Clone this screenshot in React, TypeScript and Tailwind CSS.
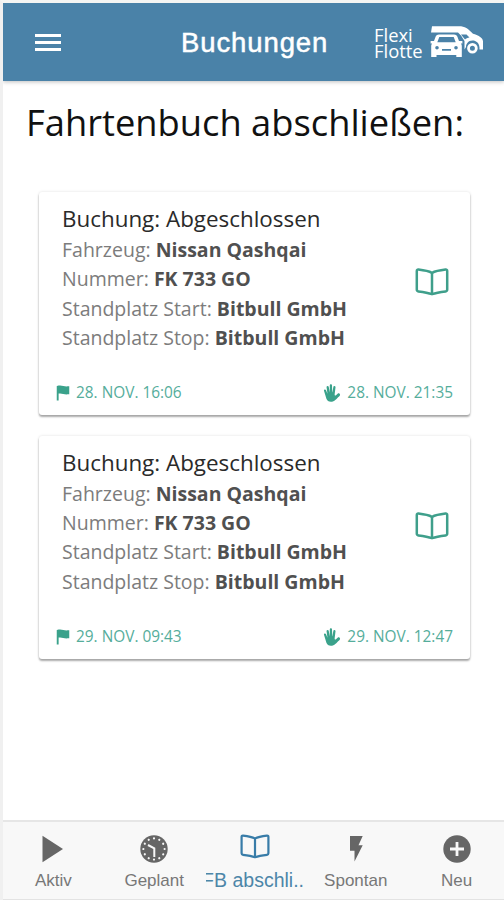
import type { ReactNode } from "react";
import { IoMdFlag, IoMdHand } from "react-icons/io";

type Booking = {
  status: string;
  vehicle: string;
  plate: string;
  from: string;
  to: string;
  start: string;
  end: string;
};

const bookings: Booking[] = [
  {
    status: "Abgeschlossen",
    vehicle: "Nissan Qashqai",
    plate: "FK 733 GO",
    from: "Bitbull GmbH",
    to: "Bitbull GmbH",
    start: "28. NOV. 16:06",
    end: "28. NOV. 21:35",
  },
  {
    status: "Abgeschlossen",
    vehicle: "Nissan Qashqai",
    plate: "FK 733 GO",
    from: "Bitbull GmbH",
    to: "Bitbull GmbH",
    start: "29. NOV. 09:43",
    end: "29. NOV. 12:47",
  },
];

const BookIcon = ({ className }: { className: string }) => (
  <svg viewBox="0 0 34 28" className={className} fill="none" stroke="currentColor" strokeWidth="2.5" strokeLinejoin="round">
    <path d="M17 4.8 C13 2.8 9 2.3 3.4 1.6 Q1.8 1.5 1.8 3 V21.6 Q1.8 23.2 3.4 23.4 C9 24 13 24.6 17 26.2 C21 24.6 25 24 30.6 23.4 Q32.2 23.2 32.2 21.6 V3 Q32.2 1.5 30.6 1.6 C25 2.3 21 2.8 17 4.8 Z" />
    <path d="M17 4.8 V26" />
  </svg>
);

const CarLogo = () => (
  <svg viewBox="0 0 54 34" className="h-[34px] w-[54px]" fill="white">
    {/* car in the back */}
    <path d="M2 1.2 H29 C35 1.2 38 3.5 43 8.8 C48 10.2 53 12.5 53 16.5 V24.5 H49.5 C50 18 46 15.5 42.5 15.5 C38 15.5 36 19 36 22 L34.5 24.5 V16 L31 10.5 L28 7.5 H1 Z" />
    <path d="M31 9.4 H36.5 L39.5 12.6 C37.5 13 36 13.6 35 14.6 Z" fill="#4a82a8" />
    <circle cx="42.4" cy="23.3" r="3.9" fill="#4a82a8" stroke="white" strokeWidth="2.8" />
    {/* car in front */}
    <path
      fillRule="evenodd"
      d="M9 9.5 H24 C26 9.5 27 10.5 27.6 12.3 L29 16 H32.4 V18.4 H30.8 C31.7 19.4 31.8 20.2 31.8 21.5 V32 H26.3 V30 H6.5 V32 H1.2 V21.5 C1.2 20.2 1.3 19.4 2.2 18.4 H.6 V16 H4 L5.4 12.3 C6 10.5 7 9.5 9 9.5 Z M9.3 12 L7.3 17.2 H25.7 L23.7 12 Z M7 21 A1.8 1.8 0 1 0 7 24.6 A1.8 1.8 0 1 0 7 21 Z M26 21 A1.8 1.8 0 1 0 26 24.6 A1.8 1.8 0 1 0 26 21 Z M12 24 V25.8 H21 V24 Z"
    />
  </svg>
);

const PlayIcon = () => (
  <svg viewBox="0 0 28 28" className="size-7" fill="currentColor">
    <path d="M3.5 .8 L24 14 L3.5 27.2 Z" />
  </svg>
);

const ClockIcon = () => (
  <svg viewBox="0 0 28 28" className="size-7">
    <circle cx="14" cy="14" r="13.7" fill="currentColor" />
    <circle
      cx="14"
      cy="14"
      r="10.6"
      fill="none"
      stroke="#f8f8f8"
      strokeWidth="2.2"
      strokeLinecap="round"
      pathLength="120"
      strokeDasharray="0.01 9.99"
    />
    <path d="M8 10 L14.3 13.4 V22" fill="none" stroke="#f8f8f8" strokeWidth="2" />
  </svg>
);

const FlashIcon = () => (
  <svg viewBox="0 0 28 28" className="size-7" fill="currentColor">
    <path d="M8 1 H20.7 L16.5 10.3 H20.7 L12.5 26.5 V15.7 H8 Z" />
  </svg>
);

const AddIcon = () => (
  <svg viewBox="0 0 28 28" className="size-7">
    <circle cx="14" cy="14" r="13.7" fill="currentColor" />
    <path d="M14 7 V21 M7 14 H21" stroke="#f8f8f8" strokeWidth="2.8" />
  </svg>
);

const Row = ({ label, value }: { label: string; value: string }) => (
  <p className="text-[19.5px] leading-[29.4px] text-[#7c7c7c]">
    {label}: <strong className="font-bold text-[#505050]">{value}</strong>
  </p>
);

const BookingCard = ({ booking }: { booking: Booking }) => (
  <div className="flex h-[223px] flex-col rounded-[3px] bg-white pt-[12px] shadow-[0_2px_2px_rgba(0,0,0,0.32),0_0_3px_rgba(0,0,0,0.13)]">
    <div className="flex items-center justify-between pr-[21px] pl-[23px]">
      <div className="whitespace-nowrap">
        <h2 className="mb-[1px] text-[22.4px] leading-[30px] text-[#2a2a2a]">Buchung: {booking.status}</h2>
        <Row label="Fahrzeug" value={booking.vehicle} />
        <Row label="Nummer" value={booking.plate} />
        <Row label="Standplatz Start" value={booking.from} />
        <Row label="Standplatz Stop" value={booking.to} />
      </div>
      <BookIcon className="mt-[8px] h-[28px] w-[34px] text-[#3f9f8b]" />
    </div>
    <div className="mt-auto mb-[11px] flex justify-between pr-[17px] pl-[14px] text-[15.4px] leading-[22px] text-[#55ad9b]">
      <div className="flex items-center gap-[3px]">
        <IoMdFlag className="size-5 text-[#3aa28b]" />
        <span>{booking.start}</span>
      </div>
      <div className="flex items-center gap-[5px]">
        <IoMdHand className="size-5 text-[#3aa28b]" />
        <span>{booking.end}</span>
      </div>
    </div>
  </div>
);

const Tab = ({ icon, label }: { icon: ReactNode; label: string }) => (
  <button className="flex min-w-0 flex-1 flex-col items-center pt-[13px] text-[#666]">
    {icon}
    <span className="mt-[7px] text-[17px] leading-[22px] text-[#777]">{label}</span>
  </button>
);

export default function App() {
  return (
    <div className="flex h-[900px] w-[504px] flex-col overflow-hidden border-t-3 border-l-3 border-t-[#f4f5f3] border-l-[#f0f0f0] bg-white font-['Open_Sans',sans-serif]">
      <header className="flex h-[78px] shrink-0 items-center bg-[#4a82a8] text-white shadow-[0_1px_4px_rgba(0,0,0,0.25)]">
        <button className="ml-8 flex w-[26px] flex-col gap-1">
          <span className="h-[3px] bg-white" />
          <span className="h-[3px] bg-white" />
          <span className="h-[3px] bg-white" />
        </button>
        <h1 className="mt-[2px] ml-[120px] w-[147px] font-['Liberation_Sans',sans-serif] text-[27.5px] leading-8 font-normal tracking-[0.9px] whitespace-nowrap [-webkit-text-stroke:0.5px_white]">
          Buchungen
        </h1>
        <div className="ml-[46px] flex items-center gap-[6px]">
          <div className="mt-[2px] flex w-[50px] flex-col text-[18.4px] leading-[16px] whitespace-nowrap">
            <span>Flexi</span>
            <span>Flotte</span>
          </div>
          <CarLogo />
        </div>
      </header>

      <main className="flex-1 pt-[17px]">
        <h2 className="pl-[23px] text-[36.3px] leading-[48px] whitespace-nowrap text-[#111]">Fahrtenbuch abschließen:</h2>
        <div className="mt-[46px] mr-[34px] ml-[36px] flex flex-col gap-[20.5px]">
          {bookings.map((booking) => (
            <BookingCard key={booking.start} booking={booking} />
          ))}
        </div>
      </main>

      <nav className="-mr-[3px] flex h-[80px] shrink-0 border-t-2 border-b border-t-[#e6e6e6] border-b-[#e3e3e3] bg-[#f8f8f8] font-['Liberation_Sans',sans-serif] whitespace-nowrap">
        <Tab icon={<PlayIcon />} label="Aktiv" />
        <Tab icon={<ClockIcon />} label="Geplant" />
        <button className="flex min-w-0 flex-1 flex-col items-center pt-[12px] text-[#387ca8]">
          <BookIcon className="h-[25px] w-[30px]" />
          {/* label is too long for the tab, so its first letter is cut off */}
          <span className="mt-[9px] flex w-[98px] justify-end overflow-hidden text-[19.5px] leading-[24px] text-[#4d86a8]">
            FB abschli..
          </span>
        </button>
        <Tab icon={<FlashIcon />} label="Spontan" />
        <Tab icon={<AddIcon />} label="Neu" />
      </nav>
    </div>
  );
}
